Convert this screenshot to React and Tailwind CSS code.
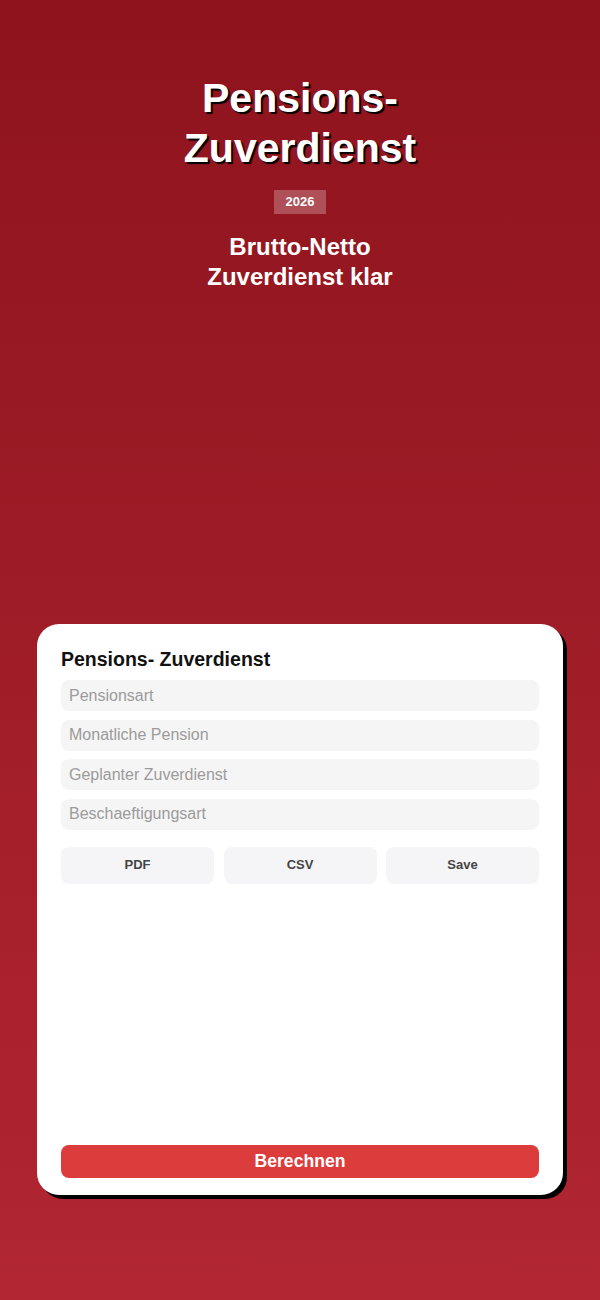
import React from "react";

const fields = ["Pensionsart", "Monatliche Pension", "Geplanter Zuverdienst", "Beschaeftigungsart"];
const actions = ["PDF", "CSV", "Save"];

const App = () => {
  return (
    <div className="min-h-[1300px] w-full bg-linear-to-b from-[#8e131d] to-[#b12632] font-['Liberation_Sans',Arial,sans-serif] flex flex-col items-center">
      {/* Hero */}
      <div className="pt-[73px] flex flex-col items-center text-center text-white">
        <h1 className="text-[41px] leading-[50px] font-bold [text-shadow:2px_2px_1px_#000]">
          Pensions-
          <br />
          Zuverdienst
        </h1>
        <span className="mt-[17px] h-[24px] px-3 flex items-center bg-white/25 text-[13px] font-bold">
          2026
        </span>
        <p className="mt-[18px] text-[24px] leading-[30px] font-bold">
          Brutto-Netto
          <br />
          Zuverdienst klar
        </p>
      </div>

      {/* Card */}
      <div className="mt-[332px] w-[526px] h-[571px] bg-white rounded-[22px] shadow-[4px_4px_0_#000] px-6 pt-6 pb-[17px] flex flex-col">
        <h2 className="text-[19.5px] leading-[22px] font-bold text-[#111]">Pensions- Zuverdienst</h2>
        <div className="mt-[10px] flex flex-col gap-[8.5px]">
          {fields.map((f) => (
            <input
              key={f}
              placeholder={f}
              className="h-[31px] w-full rounded-lg bg-[#f5f5f5] px-2 text-[16px] text-[#333] outline-none placeholder:text-[#9b9b9b]"
            />
          ))}
        </div>
        <div className="mt-[17px] grid grid-cols-3 gap-[9.5px]">
          {actions.map((a) => (
            <button
              key={a}
              className="h-[37px] rounded-lg bg-[#f5f5f8] text-[13px] font-bold text-[#444]"
            >
              {a}
            </button>
          ))}
        </div>
        <button className="mt-auto h-[33px] w-full rounded-lg bg-[#dc3c3c] text-[17.6px] font-bold text-white">
          Berechnen
        </button>
      </div>
    </div>
  );
};

export default App;
